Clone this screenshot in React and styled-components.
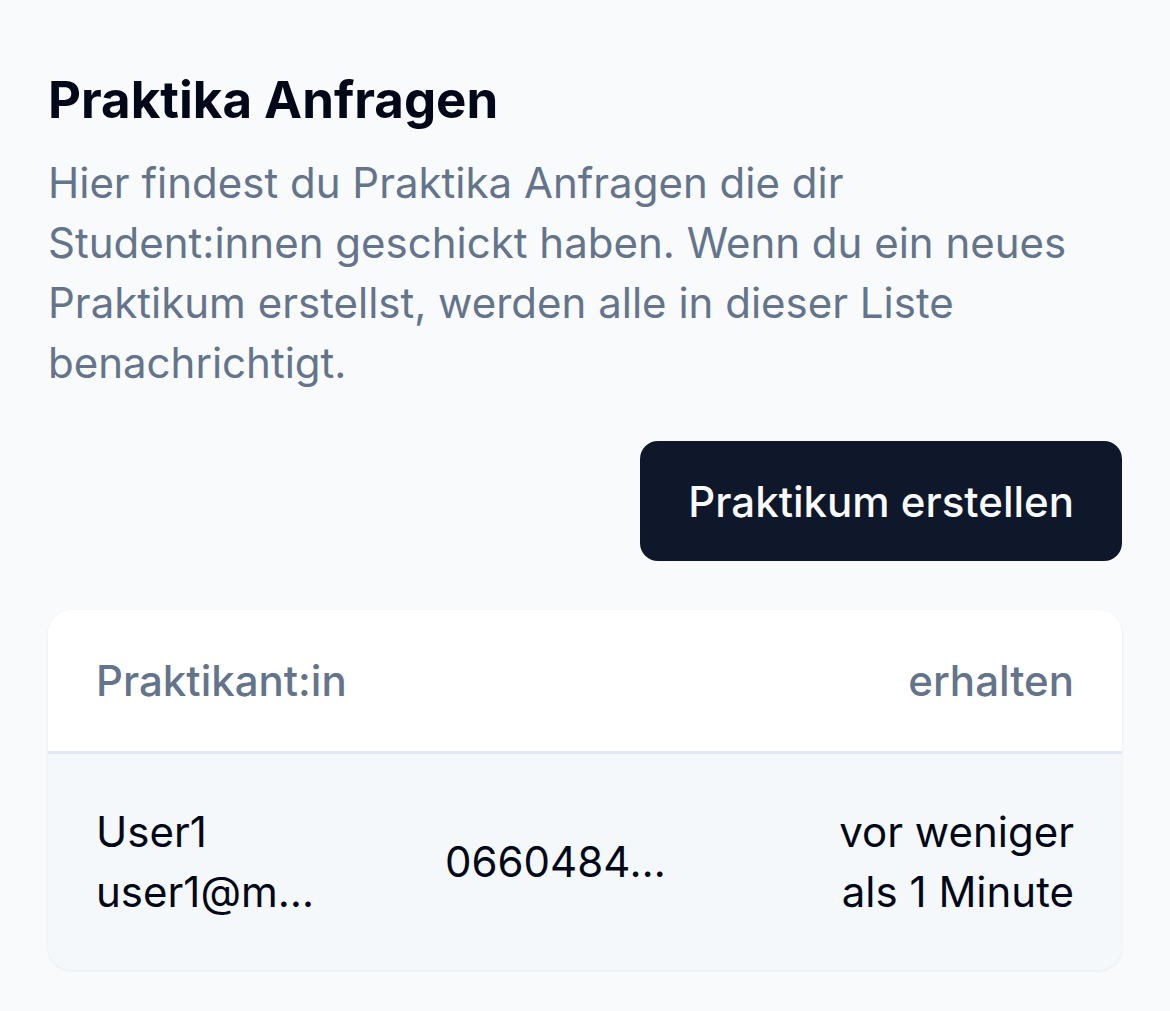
import React from 'react';
import styled, { createGlobalStyle } from 'styled-components';

const GlobalStyle = createGlobalStyle`
  * {
    box-sizing: border-box;
  }
  body {
    margin: 0;
    background-color: #f8fafc;
    font-family: Inter, "Noto Sans", sans-serif;
    color: #020817;
  }
`;

const Page = styled.div`
  display: flex;
  flex-direction: column;
  padding: 64px 48px 48px;
  min-height: 100vh;
`;

const Title = styled.h2`
  margin: 0;
  font-size: 51px;
  line-height: 72px;
  font-weight: 700;
  color: #020817;
`;

const Description = styled.p`
  margin: 17px 0 0;
  font-size: 42px;
  line-height: 60px;
  color: #64748b;
`;

const Actions = styled.div`
  display: flex;
  justify-content: flex-end;
  margin-top: 48px;
`;

const Button = styled.button`
  height: 120px;
  padding: 0 48px;
  border: none;
  border-radius: 18px;
  background-color: #0f172a;
  color: #f8fafc;
  font-family: inherit;
  font-size: 42px;
  font-weight: 500;
  cursor: pointer;
`;

const Card = styled.div`
  margin-top: 49px;
  background-color: #ffffff;
  border-radius: 24px;
  overflow: hidden;
  box-shadow: 0 1px 3px rgba(15, 23, 42, 0.08);
`;

const Row = styled.div`
  display: grid;
  grid-template-columns: 349px 1fr 236px;
  align-items: center;
  padding: ${p => (p.$head ? '0 48px' : '48px')};
  height: ${p => (p.$head ? '144px' : 'auto')};
  background-color: ${p => (p.$head ? '#ffffff' : '#f5f8fb')};
  border-bottom: ${p => (p.$head ? '3px solid #e2e8f0' : 'none')};
`;

const HeadCell = styled.div`
  font-size: 42px;
  font-weight: 500;
  color: #64748b;
  text-align: ${p => (p.$right ? 'right' : 'left')};
`;

const Cell = styled.div`
  font-size: 42px;
  line-height: 60px;
  color: #020817;
  text-align: ${p => (p.$right ? 'right' : 'left')};
  min-width: 0;
`;

const Truncate = styled.div`
  max-width: ${p => p.$width}px;
  white-space: nowrap;
  overflow: hidden;
  text-overflow: ellipsis;
`;

const requests = [
  {
    name: 'User1',
    email: 'user1@mail.com',
    phone: '066048412345',
    received: 'vor weniger als 1 Minute',
  },
];

const App = () => {
  return (
    <>
      <GlobalStyle />
      <Page>
        <Title>Praktika Anfragen</Title>
        <Description>
          Hier findest du Praktika Anfragen die dir Student:innen geschickt haben.
          Wenn du ein neues Praktikum erstellst, werden alle in dieser Liste
          benachrichtigt.
        </Description>
        <Actions>
          <Button>Praktikum erstellen</Button>
        </Actions>
        <Card>
          <Row $head>
            <HeadCell>Praktikant:in</HeadCell>
            <HeadCell />
            <HeadCell $right>erhalten</HeadCell>
          </Row>
          {requests.map((r, i) => (
            <Row key={i}>
              <Cell>
                <div>{r.name}</div>
                <Truncate $width={225}>{r.email}</Truncate>
              </Cell>
              <Cell>
                <Truncate $width={236}>{r.phone}</Truncate>
              </Cell>
              <Cell $right>{r.received}</Cell>
            </Row>
          ))}
        </Card>
      </Page>
    </>
  );
};

export default App;
